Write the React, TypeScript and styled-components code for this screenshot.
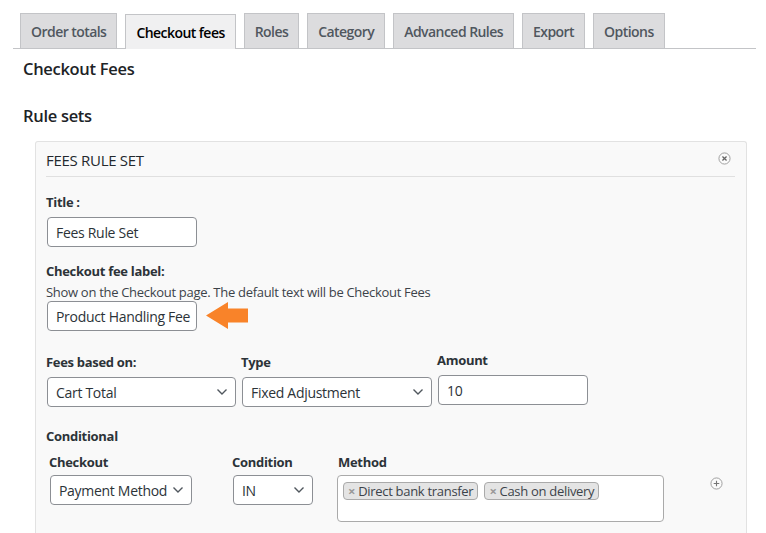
import React from "react";
import styled, { createGlobalStyle } from "styled-components";

const GlobalStyle = createGlobalStyle`
  body {
    margin: 0;
    background: #ffffff;
    font-family: "Open Sans", "Noto Sans", sans-serif;
    color: #3c434a;
    letter-spacing: -0.3px;
  }
`;

const tabs = [
  "Order totals",
  "Checkout fees",
  "Roles",
  "Category",
  "Advanced Rules",
  "Export",
  "Options",
];

const Chevron = () => (
  <svg width="12" height="8" viewBox="0 0 12 8">
    <path d="M1.5 1.5 L6 6 L10.5 1.5" fill="none" stroke="#50575e" strokeWidth="1.4" />
  </svg>
);

const CircleIcon: React.FC<{ plus?: boolean }> = ({ plus }) => (
  <svg width="13" height="13" viewBox="0 0 14 14">
    <circle cx="7" cy="7" r="6" fill="#fbfbfb" stroke="#9a9a9a" strokeWidth="1" />
    {plus ? (
      <path d="M7 4 V10 M4 7 H10" stroke="#777" strokeWidth="1.2" />
    ) : (
      <path d="M4.8 4.8 L9.2 9.2 M9.2 4.8 L4.8 9.2" stroke="#666" strokeWidth="1.4" />
    )}
  </svg>
);

const Arrow = () => (
  <svg width="44" height="28" viewBox="0 0 44 28">
    <polygon points="1,13.5 23,0 23,6.5 43,6.5 43,20.5 23,20.5 23,27" fill="#f98329" />
  </svg>
);

const App: React.FC = () => {
  return (
    <Wrap>
      <GlobalStyle />
      <TabBar>
        {tabs.map((t) => (
          <Tab key={t} active={t === "Checkout fees"}>
            {t}
          </Tab>
        ))}
      </TabBar>
      <PageTitle>Checkout Fees</PageTitle>
      <SectionTitle>Rule sets</SectionTitle>
      <Panel>
        <PanelHeader>
          <span>Fees Rule Set</span>
          <IconButton>
            <CircleIcon />
          </IconButton>
        </PanelHeader>

        <Label top={16}>Title :</Label>
        <TextInput width={150}>Fees Rule Set</TextInput>

        <Label top={15}>Checkout fee label:</Label>
        <Hint>Show on the Checkout page. The default text will be Checkout Fees</Hint>
        <InputRow>
          <TextInput width={150}>Product Handling Fee</TextInput>
          <Arrow />
        </InputRow>

        <FieldsRow>
          <Field>
            <Label top={0}>Fees based on:</Label>
            <Select width={189}>
              <span>Cart Total</span>
              <Chevron />
            </Select>
          </Field>
          <Field>
            <Label top={0}>Type</Label>
            <Select width={190}>
              <span>Fixed Adjustment</span>
              <Chevron />
            </Select>
          </Field>
          <Field>
            <Label top={-2}>Amount</Label>
            <TextInput width={150}>10</TextInput>
          </Field>
        </FieldsRow>

        <Label top={20}>Conditional</Label>
        <CondRow>
          <CondCol width={183}>
            <Label top={0} bottom={4}>Checkout</Label>
            <Select width={142}>
              <span>Payment Method</span>
              <Chevron />
            </Select>
          </CondCol>
          <CondCol width={106}>
            <Label top={0} bottom={4}>Condition</Label>
            <Select width={80}>
              <span>IN</span>
              <Chevron />
            </Select>
          </CondCol>
          <CondCol width={372}>
            <Label top={0} bottom={4}>Method</Label>
            <MultiSelect>
              <Tag>
                <TagX>×</TagX>Direct bank transfer
              </Tag>
              <Tag>
                <TagX>×</TagX>Cash on delivery
              </Tag>
            </MultiSelect>
          </CondCol>
          <PlusCell>
            <CircleIcon plus />
          </PlusCell>
        </CondRow>
      </Panel>
    </Wrap>
  );
};

export default App;

// Styled components
const Wrap = styled.div`
  width: 743px;
  padding: 13px 0 0 13px;
  height: 520px;
  overflow: hidden;
`;

const TabBar = styled.div`
  display: flex;
  gap: 8px;
  padding-left: 7px;
  border-bottom: 1px solid #c3c4c7;
  height: 35px;
`;

const Tab = styled.div<{ active?: boolean }>`
  height: 35px;
  box-sizing: border-box;
  padding: 0 10px;
  display: flex;
  align-items: center;
  border: 1px solid #c3c4c7;
  border-bottom: none;
  background: ${({ active }) => (active ? "#f0f0f1" : "#dcdcde")};
  color: ${({ active }) => (active ? "#000000" : "#50575e")};
  font-size: 14px;
  font-weight: 600;
  letter-spacing: -0.55px;
  position: relative;
  top: ${({ active }) => (active ? "1px" : "0")};
`;

const PageTitle = styled.h2`
  margin: 9px 0 0 10px;
  font-size: 16.5px;
  font-weight: 600;
  line-height: 22px;
  color: #1d2327;
`;

const SectionTitle = styled.h2`
  margin: 25px 0 0 10px;
  font-size: 16.5px;
  font-weight: 600;
  line-height: 22px;
  color: #1d2327;
`;

const Panel = styled.div`
  margin: 14px 0 0 22px;
  width: 712px;
  box-sizing: border-box;
  background: #f9f9f9;
  border: 1px solid #e2e2e2;
  border-bottom: none;
  border-radius: 3px 3px 0 0;
  padding: 0 11px 0 10px;
  display: flex;
  flex-direction: column;
  align-items: flex-start;
  height: 400px;
`;

const PanelHeader = styled.div`
  align-self: stretch;
  display: flex;
  justify-content: space-between;
  align-items: center;
  height: 32px;
  border-bottom: 1px solid #e0e0e0;
  text-transform: uppercase;
  font-size: 15px;
  font-weight: 500;
  color: #23282d;
  padding-top: 2px;
`;

const IconButton = styled.span`
  display: flex;
  margin-right: 4px;
  margin-top: -4px;
`;

const Label = styled.div<{ top: number; bottom?: number }>`
  font-size: 13px;
  font-weight: 700;
  color: #2c3338;
  line-height: 18px;
  margin-top: ${({ top }) => top}px;
  margin-bottom: ${({ bottom }) => bottom ?? 6}px;
`;

const Hint = styled.div`
  font-size: 13px;
  color: #3c434a;
  line-height: 18px;
  margin-top: -3px;
`;

const TextInput = styled.div<{ width: number }>`
  width: ${({ width }) => width}px;
  height: 30px;
  box-sizing: border-box;
  border: 1px solid #8c8f94;
  border-radius: 4px;
  background: #ffffff;
  padding: 0 8px;
  display: flex;
  align-items: center;
  font-size: 14px;
  color: #2c3338;
  margin-left: 1px;
  white-space: nowrap;
`;

const InputRow = styled.div`
  display: flex;
  align-items: center;
  gap: 8px;
`;

const FieldsRow = styled.div`
  display: flex;
  gap: 5px;
  margin-top: 22px;
`;

const Field = styled.div`
  display: flex;
  flex-direction: column;
`;

const Select = styled.div<{ width: number }>`
  width: ${({ width }) => width}px;
  height: 30px;
  box-sizing: border-box;
  border: 1px solid #8c8f94;
  border-radius: 4px;
  background: #ffffff;
  padding: 0 7px 0 8px;
  display: flex;
  align-items: center;
  justify-content: space-between;
  font-size: 14px;
  color: #2c3338;
  margin-left: 1px;
  white-space: nowrap;
`;

const CondRow = styled.div`
  display: flex;
  margin-left: 3px;
  margin-top: 2px;
`;

const CondCol = styled.div<{ width: number }>`
  width: ${({ width }) => width}px;
  display: flex;
  flex-direction: column;
`;

const MultiSelect = styled.div`
  width: 327px;
  height: 47px;
  box-sizing: border-box;
  border: 1px solid #aaaaaa;
  border-radius: 4px;
  background: #ffffff;
  padding: 6px 5px;
  display: flex;
  align-items: flex-start;
  gap: 6px;
  margin-left: -1px;
`;

const Tag = styled.span`
  display: inline-flex;
  align-items: center;
  height: 18px;
  box-sizing: border-box;
  padding: 0 4px;
  background: #e4e4e4;
  border: 1px solid #aaaaaa;
  border-radius: 4px;
  font-size: 13px;
  color: #3c434a;
  white-space: nowrap;
`;

const TagX = styled.span`
  color: #999999;
  font-weight: 700;
  margin-right: 3px;
`;

const PlusCell = styled.div`
  display: flex;
  align-items: flex-start;
  padding-top: 24px;
`;
